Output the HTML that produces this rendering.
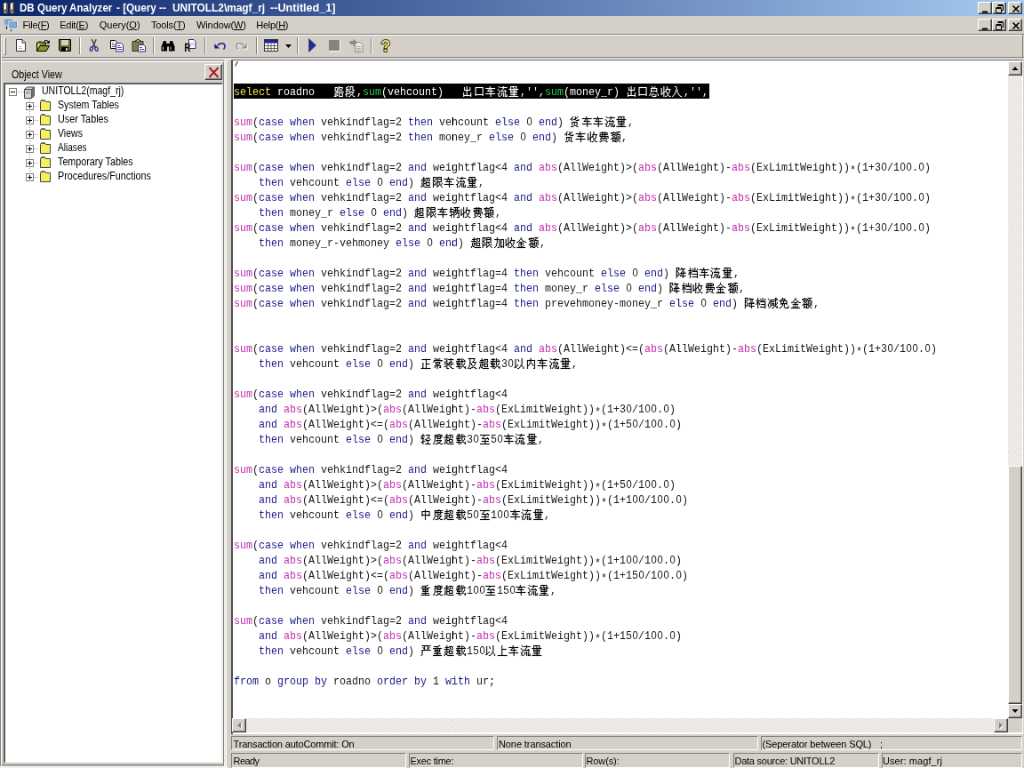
<!DOCTYPE html>
<html><head><meta charset="utf-8"><title>DB Query Analyzer</title><style>
html,body{margin:0;padding:0;}
body{width:1024px;height:768px;overflow:hidden;background:#d4d0c8;font-family:"Liberation Sans",sans-serif;}
#r{position:absolute;left:0;top:0;width:1152px;height:864px;transform:scale(0.888889);transform-origin:0 0;background:#d4d0c8;overflow:hidden;will-change:transform}
.ab{position:absolute}
.ic{position:absolute;overflow:visible}
.t{position:absolute;white-space:nowrap;font-family:"Liberation Sans",sans-serif}
.btn{background:#d4d0c8;box-sizing:border-box;border-top:1px solid #fff;border-left:1px solid #fff;border-right:1px solid #404040;border-bottom:1px solid #404040;box-shadow:inset -1px -1px 0 #808080}
.sunk{box-sizing:border-box;border-top:1px solid #808080;border-left:1px solid #808080;border-right:1px solid #fff;border-bottom:1px solid #fff}
.chk{background:#ebe9e5;background-image:conic-gradient(#fff 25%,#d8d4cc 0 50%,#fff 0 75%,#d8d4cc 0);background-size:2px 2px}
.cl{position:absolute;left:263.4px;height:17px;line-height:17px;white-space:pre;font-family:"Liberation Mono",monospace;font-size:13px;color:#181818;transform:scaleX(0.89729);transform-origin:0 0}
.cl .k{color:#20208c}
.cl .as{position:relative;top:2.5px}
.cl .z{display:inline-block;width:7.801px;text-align:center;font-family:"Liberation Sans",sans-serif;font-size:12.500px}
.cl .f{color:#c030b0}
.cl.sel{color:#fff}
.cl.sel .k{color:#e8e850}
.cl.sel .f{color:#28c850}
.cl.sel svg{fill:#fff;stroke:#fff}
.cj{stroke:#000;stroke-width:.15;display:inline-block;width:14.488px;height:17px;vertical-align:top;fill:#000;overflow:visible}
</style></head><body><div id="r"><svg width="0" height="0" style="position:absolute"><defs><path id="g8def" d="M6 2h1v1h-1zM1 3h4v1h-4zM6 3h5v1h-5zM1 4h1v1h-1zM4 4h1v1h-1zM6 4h1v1h-1zM10 4h1v1h-1zM1 5h1v1h-1zM4 5h2v1h-2zM7 5h1v1h-1zM9 5h1v1h-1zM1 6h1v1h-1zM4 6h1v1h-1zM8 6h1v1h-1zM1 7h4v1h-4zM6 7h2v1h-2zM9 7h2v1h-2zM3 8h1v1h-1zM5 8h1v1h-1zM11 8h1v1h-1zM1 9h1v1h-1zM3 9h2v1h-2zM6 9h5v1h-5zM1 10h1v1h-1zM3 10h1v1h-1zM6 10h1v1h-1zM10 10h1v1h-1zM1 11h1v1h-1zM3 11h1v1h-1zM6 11h1v1h-1zM10 11h1v1h-1zM1 12h1v1h-1zM3 12h2v1h-2zM6 12h1v1h-1zM10 12h1v1h-1zM0 13h3v1h-3zM6 13h5v1h-5z"/><path id="g6bb5" d="M3 2h2v1h-2zM6 2h4v1h-4zM1 3h2v1h-2zM6 3h1v1h-1zM9 3h1v1h-1zM1 4h1v1h-1zM6 4h1v1h-1zM9 4h1v1h-1zM1 5h4v1h-4zM6 5h1v1h-1zM9 5h1v1h-1zM1 6h1v1h-1zM5 6h1v1h-1zM9 6h3v1h-3zM1 7h4v1h-4zM1 8h1v1h-1zM5 8h6v1h-6zM1 9h1v1h-1zM5 9h1v1h-1zM9 9h1v1h-1zM1 10h4v1h-4zM6 10h1v1h-1zM9 10h1v1h-1zM0 11h2v1h-2zM7 11h2v1h-2zM1 12h1v1h-1zM6 12h1v1h-1zM9 12h1v1h-1zM1 13h1v1h-1zM4 13h2v1h-2zM10 13h2v1h-2z"/><path id="g51fa" d="M5 2h1v1h-1zM2 3h1v1h-1zM5 3h1v1h-1zM9 3h1v1h-1zM2 4h1v1h-1zM5 4h1v1h-1zM9 4h1v1h-1zM2 5h1v1h-1zM5 5h1v1h-1zM9 5h1v1h-1zM2 6h8v1h-8zM5 7h1v1h-1zM5 8h1v1h-1zM1 9h1v1h-1zM5 9h1v1h-1zM10 9h1v1h-1zM1 10h1v1h-1zM5 10h1v1h-1zM10 10h1v1h-1zM1 11h1v1h-1zM5 11h1v1h-1zM10 11h1v1h-1zM1 12h10v1h-10zM1 13h1v1h-1zM10 13h1v1h-1z"/><path id="g53e3" d="M1 3h10v1h-10zM1 4h1v1h-1zM10 4h1v1h-1zM1 5h1v1h-1zM10 5h1v1h-1zM1 6h1v1h-1zM10 6h1v1h-1zM1 7h1v1h-1zM10 7h1v1h-1zM1 8h1v1h-1zM10 8h1v1h-1zM1 9h1v1h-1zM10 9h1v1h-1zM1 10h1v1h-1zM10 10h1v1h-1zM1 11h10v1h-10zM1 12h1v1h-1zM10 12h1v1h-1z"/><path id="g8f66" d="M5 2h1v1h-1zM5 3h1v1h-1zM0 4h12v1h-12zM4 5h1v1h-1zM6 5h1v1h-1zM3 6h1v1h-1zM6 6h1v1h-1zM2 7h8v1h-8zM6 8h1v1h-1zM6 9h1v1h-1zM0 10h12v1h-12zM6 11h1v1h-1zM6 12h1v1h-1zM6 13h1v1h-1z"/><path id="g6d41" d="M1 2h1v1h-1zM7 2h1v1h-1zM2 3h1v1h-1zM4 3h8v1h-8zM7 4h1v1h-1zM0 5h1v1h-1zM6 5h1v1h-1zM1 6h1v1h-1zM5 6h1v1h-1zM9 6h1v1h-1zM2 7h1v1h-1zM4 7h7v1h-7zM2 8h1v1h-1zM10 8h1v1h-1zM2 9h1v1h-1zM5 9h1v1h-1zM7 9h1v1h-1zM9 9h1v1h-1zM0 10h2v1h-2zM5 10h1v1h-1zM7 10h1v1h-1zM9 10h1v1h-1zM1 11h1v1h-1zM5 11h1v1h-1zM7 11h1v1h-1zM9 11h1v1h-1zM11 11h1v1h-1zM1 12h1v1h-1zM4 12h1v1h-1zM7 12h1v1h-1zM9 12h1v1h-1zM11 12h1v1h-1zM1 13h1v1h-1zM3 13h1v1h-1zM7 13h1v1h-1zM9 13h3v1h-3z"/><path id="g91cf" d="M2 2h8v1h-8zM2 3h1v1h-1zM5 3h1v1h-1zM9 3h1v1h-1zM2 4h1v1h-1zM6 4h1v1h-1zM9 4h1v1h-1zM0 5h12v1h-12zM2 6h1v1h-1zM6 6h1v1h-1zM9 6h1v1h-1zM2 7h8v1h-8zM2 8h1v1h-1zM6 8h1v1h-1zM9 8h1v1h-1zM2 9h8v1h-8zM6 10h1v1h-1zM2 11h8v1h-8zM6 12h1v1h-1zM0 13h12v1h-12z"/><path id="g603b" d="M3 2h1v1h-1zM7 2h1v1h-1zM4 3h1v1h-1zM6 3h1v1h-1zM2 4h8v1h-8zM2 5h1v1h-1zM9 5h1v1h-1zM2 6h1v1h-1zM9 6h1v1h-1zM2 7h8v1h-8zM2 8h1v1h-1zM9 8h1v1h-1zM1 10h1v1h-1zM3 10h1v1h-1zM5 10h1v1h-1zM10 10h1v1h-1zM1 11h1v1h-1zM3 11h1v1h-1zM6 11h1v1h-1zM8 11h1v1h-1zM11 11h1v1h-1zM0 12h1v1h-1zM3 12h1v1h-1zM8 12h1v1h-1zM11 12h1v1h-1zM4 13h5v1h-5z"/><path id="g6536" d="M3 2h1v1h-1zM7 2h1v1h-1zM3 3h1v1h-1zM7 3h1v1h-1zM0 4h1v1h-1zM3 4h1v1h-1zM7 4h1v1h-1zM0 5h1v1h-1zM3 5h1v1h-1zM6 5h6v1h-6zM0 6h1v1h-1zM3 6h1v1h-1zM6 6h1v1h-1zM10 6h1v1h-1zM0 7h1v1h-1zM3 7h1v1h-1zM5 7h2v1h-2zM10 7h1v1h-1zM0 8h1v1h-1zM3 8h2v1h-2zM6 8h1v1h-1zM10 8h1v1h-1zM0 9h1v1h-1zM2 9h2v1h-2zM7 9h1v1h-1zM9 9h1v1h-1zM0 10h2v1h-2zM3 10h1v1h-1zM7 10h1v1h-1zM9 10h1v1h-1zM0 11h1v1h-1zM3 11h1v1h-1zM8 11h1v1h-1zM3 12h1v1h-1zM7 12h1v1h-1zM9 12h1v1h-1zM3 13h1v1h-1zM5 13h2v1h-2zM10 13h2v1h-2z"/><path id="g5165" d="M3 2h2v1h-2zM5 3h1v1h-1zM5 4h1v1h-1zM5 5h1v1h-1zM4 6h1v1h-1zM6 6h1v1h-1zM4 7h1v1h-1zM6 7h1v1h-1zM4 8h1v1h-1zM6 8h1v1h-1zM3 9h1v1h-1zM7 9h1v1h-1zM3 10h1v1h-1zM7 10h1v1h-1zM2 11h1v1h-1zM8 11h1v1h-1zM1 12h1v1h-1zM9 12h1v1h-1zM0 13h1v1h-1zM10 13h2v1h-2z"/><path id="g8d27" d="M3 2h1v1h-1zM6 2h1v1h-1zM9 2h1v1h-1zM2 3h1v1h-1zM6 3h1v1h-1zM8 3h1v1h-1zM1 4h2v1h-2zM6 4h2v1h-2zM0 5h1v1h-1zM2 5h1v1h-1zM4 5h3v1h-3zM10 5h1v1h-1zM2 6h1v1h-1zM7 6h4v1h-4zM2 8h7v1h-7zM2 9h1v1h-1zM5 9h1v1h-1zM8 9h1v1h-1zM2 10h1v1h-1zM5 10h1v1h-1zM8 10h1v1h-1zM2 11h1v1h-1zM5 11h1v1h-1zM8 11h1v1h-1zM4 12h1v1h-1zM6 12h2v1h-2zM1 13h3v1h-3zM8 13h2v1h-2z"/><path id="g8d39" d="M4 2h1v1h-1zM7 2h1v1h-1zM1 3h10v1h-10zM4 4h1v1h-1zM7 4h1v1h-1zM10 4h1v1h-1zM1 5h10v1h-10zM1 6h1v1h-1zM4 6h1v1h-1zM7 6h1v1h-1zM1 7h11v1h-11zM3 8h1v1h-1zM7 8h1v1h-1zM11 8h1v1h-1zM2 9h8v1h-8zM11 9h1v1h-1zM2 10h1v1h-1zM6 10h1v1h-1zM9 10h1v1h-1zM2 11h1v1h-1zM5 11h1v1h-1zM9 11h1v1h-1zM3 12h2v1h-2zM7 12h2v1h-2zM1 13h2v1h-2zM9 13h2v1h-2z"/><path id="g989d" d="M3 2h1v1h-1zM7 2h5v1h-5zM0 3h7v1h-7zM9 3h1v1h-1zM0 4h1v1h-1zM2 4h1v1h-1zM6 4h1v1h-1zM8 4h1v1h-1zM2 5h4v1h-4zM7 5h5v1h-5zM1 6h2v1h-2zM5 6h1v1h-1zM7 6h1v1h-1zM11 6h1v1h-1zM3 7h2v1h-2zM7 7h1v1h-1zM9 7h1v1h-1zM11 7h1v1h-1zM2 8h1v1h-1zM5 8h1v1h-1zM7 8h1v1h-1zM9 8h1v1h-1zM11 8h1v1h-1zM1 9h7v1h-7zM9 9h1v1h-1zM11 9h1v1h-1zM0 10h1v1h-1zM2 10h1v1h-1zM5 10h1v1h-1zM7 10h1v1h-1zM9 10h1v1h-1zM11 10h1v1h-1zM2 11h1v1h-1zM5 11h1v1h-1zM7 11h1v1h-1zM9 11h1v1h-1zM2 12h4v1h-4zM8 12h1v1h-1zM10 12h1v1h-1zM2 13h1v1h-1zM5 13h3v1h-3zM11 13h1v1h-1z"/><path id="g8d85" d="M3 2h1v1h-1zM3 3h1v1h-1zM6 3h5v1h-5zM1 4h5v1h-5zM7 4h1v1h-1zM10 4h1v1h-1zM3 5h1v1h-1zM7 5h1v1h-1zM10 5h1v1h-1zM0 6h6v1h-6zM7 6h1v1h-1zM9 6h2v1h-2zM3 7h1v1h-1zM6 7h1v1h-1zM1 8h1v1h-1zM3 8h1v1h-1zM6 8h5v1h-5zM1 9h1v1h-1zM3 9h4v1h-4zM10 9h1v1h-1zM1 10h1v1h-1zM3 10h1v1h-1zM6 10h1v1h-1zM10 10h1v1h-1zM1 11h1v1h-1zM3 11h1v1h-1zM6 11h5v1h-5zM0 12h1v1h-1zM2 12h2v1h-2zM0 13h1v1h-1zM4 13h8v1h-8z"/><path id="g9650" d="M0 2h4v1h-4zM5 2h6v1h-6zM0 3h1v1h-1zM3 3h1v1h-1zM5 3h1v1h-1zM10 3h1v1h-1zM0 4h1v1h-1zM3 4h1v1h-1zM5 4h6v1h-6zM0 5h1v1h-1zM2 5h1v1h-1zM5 5h1v1h-1zM10 5h1v1h-1zM0 6h2v1h-2zM5 6h1v1h-1zM10 6h1v1h-1zM0 7h1v1h-1zM2 7h1v1h-1zM5 7h6v1h-6zM0 8h1v1h-1zM3 8h1v1h-1zM5 8h1v1h-1zM7 8h1v1h-1zM0 9h1v1h-1zM3 9h1v1h-1zM5 9h1v1h-1zM8 9h1v1h-1zM11 9h1v1h-1zM0 10h2v1h-2zM3 10h1v1h-1zM5 10h1v1h-1zM8 10h1v1h-1zM10 10h1v1h-1zM0 11h1v1h-1zM2 11h1v1h-1zM5 11h1v1h-1zM7 11h1v1h-1zM9 11h1v1h-1zM0 12h1v1h-1zM5 12h2v1h-2zM10 12h1v1h-1zM0 13h1v1h-1zM5 13h1v1h-1zM11 13h1v1h-1z"/><path id="g8f86" d="M1 2h1v1h-1zM5 2h7v1h-7zM1 3h1v1h-1zM7 3h1v1h-1zM9 3h1v1h-1zM0 4h5v1h-5zM7 4h1v1h-1zM9 4h1v1h-1zM1 5h1v1h-1zM5 5h7v1h-7zM0 6h1v1h-1zM2 6h1v1h-1zM5 6h1v1h-1zM7 6h1v1h-1zM9 6h1v1h-1zM11 6h1v1h-1zM0 7h6v1h-6zM7 7h1v1h-1zM9 7h1v1h-1zM11 7h1v1h-1zM2 8h1v1h-1zM5 8h2v1h-2zM8 8h2v1h-2zM11 8h1v1h-1zM2 9h1v1h-1zM5 9h1v1h-1zM8 9h1v1h-1zM10 9h2v1h-2zM2 10h4v1h-4zM7 10h1v1h-1zM11 10h1v1h-1zM0 11h3v1h-3zM5 11h1v1h-1zM11 11h1v1h-1zM2 12h1v1h-1zM5 12h1v1h-1zM11 12h1v1h-1zM2 13h1v1h-1zM5 13h1v1h-1zM9 13h3v1h-3z"/><path id="g52a0" d="M3 2h1v1h-1zM3 3h1v1h-1zM0 4h7v1h-7zM8 4h4v1h-4zM3 5h1v1h-1zM6 5h1v1h-1zM8 5h1v1h-1zM11 5h1v1h-1zM3 6h1v1h-1zM6 6h1v1h-1zM8 6h1v1h-1zM11 6h1v1h-1zM3 7h1v1h-1zM6 7h1v1h-1zM8 7h1v1h-1zM11 7h1v1h-1zM3 8h1v1h-1zM6 8h1v1h-1zM8 8h1v1h-1zM11 8h1v1h-1zM2 9h1v1h-1zM6 9h1v1h-1zM8 9h1v1h-1zM11 9h1v1h-1zM2 10h1v1h-1zM6 10h1v1h-1zM8 10h1v1h-1zM11 10h1v1h-1zM2 11h1v1h-1zM6 11h1v1h-1zM8 11h1v1h-1zM11 11h1v1h-1zM1 12h1v1h-1zM6 12h1v1h-1zM8 12h4v1h-4zM0 13h1v1h-1zM4 13h2v1h-2zM8 13h1v1h-1zM11 13h1v1h-1z"/><path id="g91d1" d="M5 2h1v1h-1zM5 3h1v1h-1zM4 4h1v1h-1zM6 4h1v1h-1zM3 5h1v1h-1zM7 5h1v1h-1zM2 6h1v1h-1zM8 6h2v1h-2zM0 7h2v1h-2zM3 7h5v1h-5zM10 7h2v1h-2zM5 8h1v1h-1zM2 9h7v1h-7zM5 10h1v1h-1zM2 11h1v1h-1zM5 11h1v1h-1zM8 11h1v1h-1zM3 12h1v1h-1zM5 12h1v1h-1zM7 12h1v1h-1zM0 13h11v1h-11z"/><path id="g964d" d="M0 2h4v1h-4zM6 2h1v1h-1zM0 3h1v1h-1zM3 3h1v1h-1zM6 3h5v1h-5zM0 4h1v1h-1zM3 4h1v1h-1zM5 4h1v1h-1zM7 4h1v1h-1zM9 4h1v1h-1zM0 5h1v1h-1zM2 5h1v1h-1zM8 5h1v1h-1zM0 6h2v1h-2zM7 6h1v1h-1zM9 6h1v1h-1zM0 7h1v1h-1zM2 7h1v1h-1zM6 7h1v1h-1zM8 7h1v1h-1zM10 7h1v1h-1zM0 8h1v1h-1zM3 8h1v1h-1zM5 8h7v1h-7zM0 9h1v1h-1zM3 9h1v1h-1zM6 9h1v1h-1zM8 9h1v1h-1zM0 10h2v1h-2zM3 10h1v1h-1zM5 10h1v1h-1zM8 10h1v1h-1zM0 11h1v1h-1zM2 11h1v1h-1zM5 11h7v1h-7zM0 12h1v1h-1zM8 12h1v1h-1zM0 13h1v1h-1zM8 13h1v1h-1z"/><path id="g6863" d="M2 2h1v1h-1zM8 2h1v1h-1zM2 3h1v1h-1zM5 3h1v1h-1zM8 3h1v1h-1zM11 3h1v1h-1zM2 4h1v1h-1zM6 4h1v1h-1zM8 4h1v1h-1zM11 4h1v1h-1zM0 5h5v1h-5zM6 5h1v1h-1zM8 5h1v1h-1zM10 5h1v1h-1zM2 6h1v1h-1zM5 6h7v1h-7zM1 7h3v1h-3zM11 7h1v1h-1zM1 8h2v1h-2zM4 8h1v1h-1zM11 8h1v1h-1zM0 9h1v1h-1zM2 9h1v1h-1zM4 9h1v1h-1zM6 9h6v1h-6zM2 10h1v1h-1zM11 10h1v1h-1zM2 11h1v1h-1zM11 11h1v1h-1zM2 12h1v1h-1zM5 12h7v1h-7zM2 13h1v1h-1zM11 13h1v1h-1z"/><path id="g51cf" d="M9 2h2v1h-2zM0 3h1v1h-1zM9 3h1v1h-1zM11 3h1v1h-1zM1 4h1v1h-1zM3 4h9v1h-9zM3 5h1v1h-1zM9 5h1v1h-1zM2 6h6v1h-6zM9 6h1v1h-1zM1 7h1v1h-1zM3 7h1v1h-1zM9 7h1v1h-1zM11 7h1v1h-1zM1 8h1v1h-1zM3 8h1v1h-1zM5 8h3v1h-3zM9 8h1v1h-1zM11 8h1v1h-1zM0 9h1v1h-1zM3 9h1v1h-1zM5 9h1v1h-1zM7 9h1v1h-1zM9 9h2v1h-2zM0 10h1v1h-1zM3 10h1v1h-1zM5 10h3v1h-3zM9 10h1v1h-1zM0 11h1v1h-1zM3 11h1v1h-1zM8 11h2v1h-2zM11 11h1v1h-1zM2 12h1v1h-1zM7 12h1v1h-1zM10 12h2v1h-2zM1 13h1v1h-1zM5 13h2v1h-2zM11 13h1v1h-1z"/><path id="g514d" d="M4 2h1v1h-1zM3 3h5v1h-5zM2 4h1v1h-1zM6 4h1v1h-1zM0 5h10v1h-10zM2 6h1v1h-1zM5 6h1v1h-1zM9 6h1v1h-1zM2 7h1v1h-1zM5 7h1v1h-1zM9 7h1v1h-1zM2 8h8v1h-8zM2 9h1v1h-1zM4 9h1v1h-1zM6 9h1v1h-1zM9 9h1v1h-1zM4 10h1v1h-1zM6 10h1v1h-1zM3 11h1v1h-1zM6 11h1v1h-1zM11 11h1v1h-1zM2 12h1v1h-1zM6 12h1v1h-1zM11 12h1v1h-1zM0 13h2v1h-2zM7 13h5v1h-5z"/><path id="g6b63" d="M1 3h11v1h-11zM6 4h1v1h-1zM6 5h1v1h-1zM6 6h1v1h-1zM2 7h1v1h-1zM6 7h1v1h-1zM2 8h1v1h-1zM6 8h5v1h-5zM2 9h1v1h-1zM6 9h1v1h-1zM2 10h1v1h-1zM6 10h1v1h-1zM2 11h1v1h-1zM6 11h1v1h-1zM2 12h1v1h-1zM6 12h1v1h-1zM0 13h12v1h-12z"/><path id="g5e38" d="M2 2h1v1h-1zM5 2h1v1h-1zM8 2h1v1h-1zM3 3h1v1h-1zM5 3h1v1h-1zM7 3h1v1h-1zM1 4h11v1h-11zM1 5h1v1h-1zM10 5h1v1h-1zM0 6h1v1h-1zM3 6h6v1h-6zM3 7h1v1h-1zM8 7h1v1h-1zM3 8h6v1h-6zM5 9h1v1h-1zM2 10h8v1h-8zM2 11h1v1h-1zM5 11h1v1h-1zM9 11h1v1h-1zM2 12h1v1h-1zM5 12h1v1h-1zM8 12h2v1h-2zM5 13h1v1h-1z"/><path id="g88c5" d="M0 2h1v1h-1zM3 2h1v1h-1zM8 2h1v1h-1zM1 3h1v1h-1zM3 3h1v1h-1zM5 3h7v1h-7zM3 4h1v1h-1zM8 4h1v1h-1zM2 5h2v1h-2zM8 5h1v1h-1zM0 6h2v1h-2zM3 6h1v1h-1zM6 6h5v1h-5zM3 7h1v1h-1zM6 7h1v1h-1zM0 8h12v1h-12zM4 9h2v1h-2zM9 9h1v1h-1zM2 10h2v1h-2zM6 10h1v1h-1zM8 10h1v1h-1zM0 11h2v1h-2zM3 11h1v1h-1zM7 11h1v1h-1zM3 12h1v1h-1zM8 12h2v1h-2zM3 13h3v1h-3zM10 13h2v1h-2z"/><path id="g8f7d" d="M3 2h1v1h-1zM7 2h1v1h-1zM1 3h5v1h-5zM7 3h1v1h-1zM9 3h1v1h-1zM3 4h1v1h-1zM7 4h1v1h-1zM10 4h1v1h-1zM0 5h12v1h-12zM2 6h1v1h-1zM7 6h1v1h-1zM0 7h6v1h-6zM7 7h1v1h-1zM10 7h1v1h-1zM1 8h1v1h-1zM3 8h1v1h-1zM7 8h1v1h-1zM10 8h1v1h-1zM1 9h5v1h-5zM7 9h1v1h-1zM9 9h1v1h-1zM3 10h1v1h-1zM8 10h1v1h-1zM0 11h6v1h-6zM7 11h1v1h-1zM9 11h1v1h-1zM11 11h1v1h-1zM3 12h1v1h-1zM6 12h1v1h-1zM10 12h2v1h-2zM3 13h1v1h-1zM5 13h1v1h-1zM11 13h1v1h-1z"/><path id="g53ca" d="M1 2h9v1h-9zM3 3h1v1h-1zM8 3h1v1h-1zM3 4h1v1h-1zM8 4h1v1h-1zM3 5h1v1h-1zM7 5h1v1h-1zM3 6h1v1h-1zM6 6h5v1h-5zM3 7h2v1h-2zM10 7h1v1h-1zM3 8h1v1h-1zM5 8h1v1h-1zM9 8h1v1h-1zM3 9h1v1h-1zM5 9h1v1h-1zM9 9h1v1h-1zM2 10h1v1h-1zM6 10h1v1h-1zM8 10h1v1h-1zM2 11h1v1h-1zM7 11h1v1h-1zM1 12h1v1h-1zM5 12h2v1h-2zM8 12h2v1h-2zM0 13h1v1h-1zM2 13h3v1h-3zM10 13h2v1h-2z"/><path id="g4ee5" d="M9 2h1v1h-1zM1 3h1v1h-1zM4 3h1v1h-1zM9 3h1v1h-1zM1 4h1v1h-1zM5 4h1v1h-1zM9 4h1v1h-1zM1 5h1v1h-1zM5 5h1v1h-1zM9 5h1v1h-1zM1 6h1v1h-1zM9 6h1v1h-1zM1 7h1v1h-1zM9 7h1v1h-1zM1 8h1v1h-1zM9 8h1v1h-1zM1 9h1v1h-1zM4 9h1v1h-1zM8 9h1v1h-1zM1 10h1v1h-1zM3 10h1v1h-1zM8 10h2v1h-2zM1 11h2v1h-2zM7 11h1v1h-1zM10 11h1v1h-1zM0 12h2v1h-2zM6 12h1v1h-1zM11 12h1v1h-1zM4 13h2v1h-2zM11 13h1v1h-1z"/><path id="g5185" d="M5 2h1v1h-1zM5 3h1v1h-1zM1 4h10v1h-10zM1 5h1v1h-1zM5 5h1v1h-1zM10 5h1v1h-1zM1 6h1v1h-1zM5 6h1v1h-1zM10 6h1v1h-1zM1 7h1v1h-1zM4 7h1v1h-1zM6 7h1v1h-1zM10 7h1v1h-1zM1 8h1v1h-1zM4 8h1v1h-1zM7 8h1v1h-1zM10 8h1v1h-1zM1 9h1v1h-1zM3 9h1v1h-1zM8 9h1v1h-1zM10 9h1v1h-1zM1 10h2v1h-2zM8 10h1v1h-1zM10 10h1v1h-1zM1 11h1v1h-1zM10 11h1v1h-1zM1 12h1v1h-1zM10 12h1v1h-1zM1 13h1v1h-1zM9 13h2v1h-2z"/><path id="g8f7b" d="M2 2h1v1h-1zM2 3h1v1h-1zM6 3h5v1h-5zM0 4h5v1h-5zM10 4h1v1h-1zM1 5h1v1h-1zM9 5h1v1h-1zM0 6h1v1h-1zM2 6h1v1h-1zM8 6h2v1h-2zM0 7h4v1h-4zM7 7h1v1h-1zM10 7h1v1h-1zM2 8h1v1h-1zM5 8h2v1h-2zM11 8h1v1h-1zM2 9h1v1h-1zM6 9h5v1h-5zM2 10h3v1h-3zM8 10h1v1h-1zM0 11h3v1h-3zM8 11h1v1h-1zM2 12h1v1h-1zM8 12h1v1h-1zM2 13h1v1h-1zM5 13h7v1h-7z"/><path id="g5ea6" d="M7 2h1v1h-1zM2 3h10v1h-10zM2 4h1v1h-1zM5 4h1v1h-1zM9 4h1v1h-1zM2 5h10v1h-10zM2 6h1v1h-1zM5 6h1v1h-1zM9 6h1v1h-1zM2 7h1v1h-1zM5 7h5v1h-5zM2 8h1v1h-1zM2 9h1v1h-1zM4 9h7v1h-7zM2 10h1v1h-1zM5 10h1v1h-1zM9 10h1v1h-1zM1 11h1v1h-1zM6 11h1v1h-1zM8 11h1v1h-1zM1 12h1v1h-1zM6 12h3v1h-3zM0 13h1v1h-1zM3 13h3v1h-3zM9 13h3v1h-3z"/><path id="g81f3" d="M0 3h12v1h-12zM5 4h1v1h-1zM4 5h1v1h-1zM3 6h1v1h-1zM9 6h1v1h-1zM2 7h9v1h-9zM6 8h1v1h-1zM10 8h1v1h-1zM6 9h1v1h-1zM2 10h9v1h-9zM6 11h1v1h-1zM6 12h1v1h-1zM0 13h12v1h-12z"/><path id="g4e2d" d="M5 2h1v1h-1zM5 3h1v1h-1zM1 4h10v1h-10zM1 5h1v1h-1zM5 5h1v1h-1zM10 5h1v1h-1zM1 6h1v1h-1zM5 6h1v1h-1zM10 6h1v1h-1zM1 7h1v1h-1zM5 7h1v1h-1zM10 7h1v1h-1zM1 8h10v1h-10zM1 9h1v1h-1zM5 9h1v1h-1zM10 9h1v1h-1zM5 10h1v1h-1zM5 11h1v1h-1zM5 12h1v1h-1zM5 13h1v1h-1z"/><path id="g91cd" d="M7 2h2v1h-2zM1 3h6v1h-6zM5 4h1v1h-1zM0 5h11v1h-11zM2 6h1v1h-1zM5 6h1v1h-1zM8 6h1v1h-1zM2 7h7v1h-7zM2 8h1v1h-1zM5 8h1v1h-1zM8 8h1v1h-1zM2 9h7v1h-7zM5 10h1v1h-1zM1 11h9v1h-9zM5 12h1v1h-1zM0 13h11v1h-11z"/><path id="g4e25" d="M1 2h11v1h-11zM4 3h1v1h-1zM8 3h1v1h-1zM2 4h1v1h-1zM4 4h1v1h-1zM8 4h1v1h-1zM10 4h1v1h-1zM3 5h2v1h-2zM8 5h2v1h-2zM4 6h1v1h-1zM8 6h1v1h-1zM1 7h11v1h-11zM1 8h1v1h-1zM1 9h1v1h-1zM1 10h1v1h-1zM1 11h1v1h-1zM1 12h1v1h-1zM0 13h1v1h-1z"/><path id="g4e0a" d="M5 2h1v1h-1zM5 3h1v1h-1zM5 4h1v1h-1zM5 5h1v1h-1zM5 6h6v1h-6zM5 7h1v1h-1zM5 8h1v1h-1zM5 9h1v1h-1zM5 10h1v1h-1zM5 11h1v1h-1zM5 12h1v1h-1zM0 13h12v1h-12z"/></defs></svg>
<div class="ab " style="left:0.00px;top:0.00px;width:1152.00px;height:18.00px;background:linear-gradient(90deg,#0a246a,#a6caf0)"></div>
<svg class="ic" style="left:2px;top:1px" width="16" height="16" viewBox="0 0 16 16"><rect x="1.500" y="1.500" width="5.500" height="13" rx="2" fill="#a8a8a8" stroke="#1c1c1c"/><rect x="9" y="1.500" width="5.500" height="13" rx="2" fill="#a8a8a8" stroke="#1c1c1c"/><rect x="2.500" y="3" width="2.500" height="6" fill="#f4f4f4"/><rect x="10" y="3" width="2.500" height="6" fill="#f4f4f4"/><rect x="5" y="3" width="1.500" height="10" fill="#484848"/><rect x="12.500" y="3" width="1.500" height="10" fill="#484848"/><rect x="2.500" y="10" width="2.500" height="3" fill="#707070"/><rect x="10" y="10" width="2.500" height="3" fill="#707070"/></svg>
<div class="t" style="left:22.30px;top:1.00px;height:16px;line-height:16px;font-size:12px;font-weight:bold;transform:scaleX(0.9635);transform-origin:0 50%;color:#fff;white-space:pre;">DB Query Analyzer</div>
<div class="t" style="left:131.00px;top:1.00px;height:16px;line-height:16px;font-size:12px;font-weight:bold;transform:scaleX(0.9733);transform-origin:0 50%;color:#fff;white-space:pre;">- [Query --</div>
<div class="t" style="left:193.50px;top:1.00px;height:16px;line-height:16px;font-size:12px;font-weight:bold;transform:scaleX(0.9903);transform-origin:0 50%;color:#fff;white-space:pre;">UNITOLL2\magf_rj</div>
<div class="t" style="left:304.30px;top:1.00px;height:16px;line-height:16px;font-size:12px;font-weight:bold;transform:scaleX(1.0502);transform-origin:0 50%;color:#fff;white-space:pre;">--Untitled_1]</div>
<div class="ab btn" style="left:1100.00px;top:2.00px;width:16px;height:14px"><svg width="16" height="14" viewBox="0 0 16 14" style="position:absolute;left:0;top:0"><path d="M4 10.500h6" stroke="#000" stroke-width="2"/></svg></div>
<div class="ab btn" style="left:1116.00px;top:2.00px;width:16px;height:14px"><svg width="16" height="14" viewBox="0 0 16 14" style="position:absolute;left:0;top:0"><path d="M5.500 3.500h6v5h-2M5.500 2.500h6" stroke="#000" fill="none"/><path d="M3.500 6.500h6v5h-6zM3.500 5.500h6" stroke="#000" fill="none"/></svg></div>
<div class="ab btn" style="left:1134.00px;top:2.00px;width:16px;height:14px"><svg width="16" height="14" viewBox="0 0 16 14" style="position:absolute;left:0;top:0"><path d="M4.500 3.500l7 7M11.500 3.500l-7 7" stroke="#000" stroke-width="1.700"/></svg></div>
<svg class="ic" style="left:4px;top:20px" width="17" height="17" viewBox="0 0 17 17"><rect x="1" y="1.500" width="9" height="6.500" fill="#7aa0c4" stroke="#a4c0d8"/><rect x="6" y="4" width="9.500" height="8" fill="#5c8ebc" stroke="#dce8f2"/><rect x="7.500" y="5.500" width="6.500" height="5" fill="#80acd2"/><path d="M3.500 9.500v3.500" stroke="#202020" stroke-width="1.200"/><path d="M8.500 13v2.500" stroke="#405060" stroke-width="1.200"/></svg>
<div class="t" style="left:25.60px;top:19.50px;height:16px;line-height:16px;font-size:11px;letter-spacing:-0.267px;color:#000;">File(<u>F</u>)</div>
<div class="t" style="left:67.30px;top:19.50px;height:16px;line-height:16px;font-size:11px;letter-spacing:-0.274px;color:#000;">Edit(<u>E</u>)</div>
<div class="t" style="left:111.80px;top:19.50px;height:16px;line-height:16px;font-size:11px;letter-spacing:-0.017px;color:#000;">Query(<u>Q</u>)</div>
<div class="t" style="left:169.90px;top:19.50px;height:16px;line-height:16px;font-size:11px;letter-spacing:-0.128px;color:#000;">Tools(<u>T</u>)</div>
<div class="t" style="left:221.00px;top:19.50px;height:16px;line-height:16px;font-size:11px;letter-spacing:-0.103px;color:#000;">Window(<u>W</u>)</div>
<div class="t" style="left:288.30px;top:19.50px;height:16px;line-height:16px;font-size:11px;letter-spacing:-0.285px;color:#000;">Help(<u>H</u>)</div>
<div class="ab btn" style="left:1100.00px;top:21.00px;width:16px;height:14px"><svg width="16" height="14" viewBox="0 0 16 14" style="position:absolute;left:0;top:0"><path d="M4 10.500h6" stroke="#000" stroke-width="2"/></svg></div>
<div class="ab btn" style="left:1116.00px;top:21.00px;width:16px;height:14px"><svg width="16" height="14" viewBox="0 0 16 14" style="position:absolute;left:0;top:0"><path d="M5.500 3.500h6v5h-2M5.500 2.500h6" stroke="#000" fill="none"/><path d="M3.500 6.500h6v5h-6zM3.500 5.500h6" stroke="#000" fill="none"/></svg></div>
<div class="ab btn" style="left:1134.00px;top:21.00px;width:16px;height:14px"><svg width="16" height="14" viewBox="0 0 16 14" style="position:absolute;left:0;top:0"><path d="M4.500 3.500l7 7M11.500 3.500l-7 7" stroke="#000" stroke-width="1.700"/></svg></div>
<div class="ab " style="left:0.00px;top:38.00px;width:1152.00px;height:1.00px;background:#808080"></div>
<div class="ab " style="left:0.00px;top:39.00px;width:1150.00px;height:1.00px;background:#fff"></div>
<div class="ab " style="left:1150.00px;top:39.00px;width:1.00px;height:26.00px;background:#808080"></div>
<div class="ab " style="left:0.00px;top:64.00px;width:1152.00px;height:1.00px;background:#808080"></div>
<div class="ab " style="left:0.00px;top:66.00px;width:1152.00px;height:1.00px;background:#fff"></div>
<div class="ab " style="left:4.00px;top:42.00px;width:3.00px;height:20.00px;border-left:1px solid #fff;border-top:1px solid #fff;border-right:1px solid #808080;border-bottom:1px solid #808080;box-sizing:border-box"></div>
<svg class="ic" style="left:15.00px;top:42.60px" width="16" height="16" viewBox="0 0 16 16"><path d="M3.5 1.5h6.500l3.500 3.500v9.500h-10z" fill="#fff" stroke="#303030"/><path d="M10 1.500v3.500h3.500" fill="#e8e8e8" stroke="#303030"/><path d="M6 9.500h3M6 11.500h4" stroke="#b0b0b0"/></svg>
<svg class="ic" style="left:40.00px;top:42.60px" width="16" height="16" viewBox="0 0 16 16"><path d="M1.500 14.500v-9.500h1l1-1h3l1 1h4v2.500" fill="#8a8a28" stroke="#000"/><path d="M2.500 6v7l2-4.500v-2.500z" fill="#f0f090"/><path d="M1.500 14.500l3.500-6h10.500l-3.500 6z" fill="#8c9428" stroke="#000"/><path d="M9.500 4.500c1-2.700 4-2.700 5.300 .3" fill="none" stroke="#000" stroke-width="1.200"/><path d="M15.800 2.300v3.700h-3.700z" fill="#000"/></svg>
<svg class="ic" style="left:65.00px;top:42.60px" width="16" height="16" viewBox="0 0 16 16"><path d="M1.5 1.5h13v13h-12l-1-1z" fill="#6e6e1e" stroke="#000"/><rect x="4" y="2" width="8" height="6" fill="#d4d0c8"/><rect x="4" y="10" width="8" height="5" fill="#000"/><rect x="9" y="11" width="2" height="3" fill="#d4d0c8"/></svg>
<div class="ab" style="left:88.70px;top:41.50px;width:1px;height:19.50px;background:#808080"></div><div class="ab" style="left:89.70px;top:41.50px;width:1px;height:19.50px;background:#fff"></div>
<svg class="ic" style="left:98.00px;top:42.60px" width="16" height="16" viewBox="0 0 16 16"><path d="M5.300 1.200l4.200 9.500M10.200 1.200l-4.200 9.500" stroke="#303040" stroke-width="1.300" fill="none"/><ellipse cx="4.900" cy="12" rx="1.500" ry="2.400" fill="none" stroke="#2c2c98" stroke-width="1.300" transform="rotate(15 4.900 12)"/><ellipse cx="10.500" cy="12" rx="1.500" ry="2.400" fill="none" stroke="#2c2c98" stroke-width="1.300" transform="rotate(-15 10.500 12)"/></svg>
<svg class="ic" style="left:123.00px;top:42.60px" width="16" height="16" viewBox="0 0 16 16"><path d="M1.500 2.500h5l2 2v7h-7z" fill="#fff" stroke="#000"/><path d="M3 5.500h2M3 7.500h4M3 9.500h4" stroke="#606060"/><path d="M7.500 5.500h6l2 2v7.500h-8z" fill="#fff" stroke="#282888"/><path d="M9 8.500h3M9 10.500h5M9 12.500h5" stroke="#4848a8"/></svg>
<svg class="ic" style="left:148.00px;top:42.60px" width="16" height="16" viewBox="0 0 16 16"><path d="M1 3.500h12v11h-12z" fill="#80804c" stroke="#303018"/><path d="M4.500 4v-1.500h1.500v-1h2.500v1h1.500v1.500z" fill="#d8d8c8" stroke="#303018"/><path d="M7.500 7.500h6l2 2v5.500h-8z" fill="#fff" stroke="#282888"/><path d="M9 10.500h3M9 12.500h5" stroke="#4848a8"/></svg>
<div class="ab" style="left:171.70px;top:41.50px;width:1px;height:19.50px;background:#808080"></div><div class="ab" style="left:172.70px;top:41.50px;width:1px;height:19.50px;background:#fff"></div>
<svg class="ic" style="left:181.00px;top:42.60px" width="16" height="16" viewBox="0 0 16 16"><path d="M.5 14.500v-5l2.500-6.500h2.500l1.500 4.500v7z" fill="#000"/><path d="M15.500 14.500v-5l-2.500-6.500h-2.500l-1.500 4.500v7z" fill="#000"/><rect x="6.500" y="6" width="3" height="3.500" fill="#000"/><rect x="2" y="9.500" width="1" height="3.500" fill="#c8c8c8"/><rect x="10.500" y="9.500" width="1" height="3.500" fill="#c8c8c8"/></svg>
<svg class="ic" style="left:206.00px;top:42.60px" width="16" height="16" viewBox="0 0 16 16"><path d="M6.500 1.500h5.500l2 2v8h-7.500z" fill="#fff" stroke="#282888"/><path d="M8 5.500h4M8 7.500h4" stroke="#b0b0d8"/><path d="M2.700 15v-8.500h2.600c2.300 0 2.300 4 0 4h-2.600M5.300 10.500l2.200 4.500" fill="none" stroke="#000" stroke-width="1.500"/></svg>
<div class="ab" style="left:229.70px;top:41.50px;width:1px;height:19.50px;background:#808080"></div><div class="ab" style="left:230.70px;top:41.50px;width:1px;height:19.50px;background:#fff"></div>
<svg class="ic" style="left:239.00px;top:42.60px" width="16" height="16" viewBox="0 0 16 16"><path d="M6 8.500c1.500-3.500 8-4 8 .5c0 1.500-.5 2.500-1.500 3.500" fill="none" stroke="#202088" stroke-width="1.500"/><path d="M2.300 6.200v5.300h5.700z" fill="#181880"/></svg>
<svg class="ic" style="left:264.00px;top:42.60px" width="16" height="16" viewBox="0 0 16 16"><g transform="translate(1 1)"><path d="M10 8.500c-1.500-3.500-8-4-8 .5c0 1.500.5 2.500 1.500 3.500" fill="none" stroke="#fff" stroke-width="1.500"/><path d="M13.700 6.200v5.300h-5.700z" fill="#fff"/></g><path d="M10 8.500c-1.500-3.500-8-4-8 .5c0 1.500.5 2.500 1.500 3.500" fill="none" stroke="#8c8c8c" stroke-width="1.500"/><path d="M13.700 6.200v5.300h-5.700z" fill="#8c8c8c"/></svg>
<div class="ab" style="left:287.70px;top:41.50px;width:1px;height:19.50px;background:#808080"></div><div class="ab" style="left:288.70px;top:41.50px;width:1px;height:19.50px;background:#fff"></div>
<svg class="ic" style="left:297.00px;top:42.60px" width="16" height="16" viewBox="0 0 16 16"><rect x=".5" y="1.500" width="15" height="13" fill="#fff" stroke="#303030"/><rect x="1" y="2" width="14" height="3.500" fill="#20209a"/><path d="M1 8.500h14M1 11.500h14M4.500 5.500v9M8 5.500v9M11.500 5.500v9" stroke="#404040" stroke-width=".8"/></svg>
<svg class="ic" style="left:320.50px;top:49.60px" width="7" height="4" viewBox="0 0 7 4"><path d="M0 0h7l-3.500 4z" fill="#000"/></svg>
<div class="ab" style="left:333.70px;top:41.50px;width:1px;height:19.50px;background:#808080"></div><div class="ab" style="left:334.70px;top:41.50px;width:1px;height:19.50px;background:#fff"></div>
<svg class="ic" style="left:343.00px;top:42.60px" width="16" height="16" viewBox="0 0 16 16"><path d="M4.500 .5l8 7.500l-8 7.500z" fill="#28288c" stroke="#28288c" stroke-width=".6"/></svg>
<svg class="ic" style="left:368.00px;top:42.60px" width="16" height="16" viewBox="0 0 16 16"><rect x="2" y="2" width="12" height="12" fill="#848484"/><path d="M2.500 14.500h12v-12" stroke="#fff" fill="none"/></svg>
<svg class="ic" style="left:393.00px;top:42.60px" width="16" height="16" viewBox="0 0 16 16"><path d="M6.500 4.500h5.500l3 3v8h-8.500z" fill="#eceae4" stroke="#8c8c8c"/><path d="M8 9.500h5M8 11.500h5M8 13.500h5" stroke="#a0a0a0"/><path d="M.5 3h4v-2.500l4.500 4.500l-4.500 4.500v-2.500h-4z" fill="#8c8c8c"/></svg>
<div class="ab" style="left:416.70px;top:41.50px;width:1px;height:19.50px;background:#808080"></div><div class="ab" style="left:417.70px;top:41.50px;width:1px;height:19.50px;background:#fff"></div>
<svg class="ic" style="left:426.00px;top:42.60px" width="16" height="16" viewBox="0 0 16 16"><text x="8" y="14.500" text-anchor="middle" font-family="Liberation Sans" font-weight="bold" font-size="18" fill="#ece460" stroke="#000" stroke-width="1.500" paint-order="stroke">?</text></svg>
<div class="ab " style="left:0.00px;top:39.00px;width:1.00px;height:825.00px;background:#868686"></div>
<div class="ab " style="left:1.00px;top:39.00px;width:1.00px;height:825.00px;background:#f6f6f4"></div>
<div class="ab " style="left:2.00px;top:67.00px;width:250.00px;height:1.00px;background:#8c8c8c"></div>
<div class="ab " style="left:2.00px;top:69.00px;width:250.00px;height:793.00px;border-top:1px solid #fff;border-right:1px solid #808080;border-bottom:3px solid #aaa6a0;box-sizing:border-box"></div>
<div class="ab " style="left:0.00px;top:862.00px;width:256.00px;height:2.00px;background:#f4f4f2"></div>
<div class="t" style="left:12.70px;top:76.00px;height:16px;line-height:16px;font-size:12px;transform:scaleX(0.8886);transform-origin:0 50%;color:#000;">Object View</div>
<div class="ab btn" style="left:229.50px;top:72.00px;width:20.50px;height:18.00px;"><svg width="20" height="18" viewBox="0 0 20 18" style="position:absolute;left:0;top:0"><path d="M4.500 3l10 11M14.500 3l-10 11" stroke="#b01818" stroke-width="2"/></svg></div>
<div class="ab " style="left:4.00px;top:93.00px;width:247.00px;height:766.00px;background:#fff;border-top:2px solid #606060;border-left:2px solid #5a5a5a;border-right:2px solid #eceae6;border-bottom:2px solid #eceae6;box-sizing:border-box"></div>
<div class="ab " style="left:13.50px;top:103.00px;width:14.00px;height:1.00px;background:repeating-linear-gradient(90deg,#a0a0a0 0 1px,transparent 1px 2px)"></div>
<div class="ab " style="left:33.00px;top:111.00px;width:1.00px;height:88.00px;background:repeating-linear-gradient(180deg,#a0a0a0 0 1px,transparent 1px 2px)"></div>
<div class="ab " style="left:9.50px;top:98.50px;width:9.00px;height:9.00px;background:#fff;border:1px solid #808080;box-sizing:border-box"><div class="ab" style="left:1px;top:3px;width:5px;height:1px;background:#000"></div></div>
<svg class="ic" style="left:25px;top:96px" width="16" height="16" viewBox="0 0 16 16"><path d="M2.500 4.500l3-2.500h8v10l-3 2.500h-8z" fill="#d8d8d8" stroke="#404040"/><path d="M2.500 4.500h8v10M10.500 4.500l3-2.500" fill="none" stroke="#404040"/><path d="M10.500 4.500l3-2.500v10l-3 2.500z" fill="#707070"/><path d="M4 7h5M4 9h5" stroke="#888"/></svg>
<div class="t" style="left:46.50px;top:94.40px;height:16px;line-height:16px;font-size:12px;transform:scaleX(0.8775);transform-origin:0 50%;color:#000;">UNITOLL2(magf_rj)</div>
<div class="ab " style="left:38.00px;top:119.00px;width:6.00px;height:1.00px;background:repeating-linear-gradient(90deg,#a0a0a0 0 1px,transparent 1px 2px)"></div>
<div class="ab " style="left:29.00px;top:114.50px;width:9.00px;height:9.00px;background:#fff;border:1px solid #808080;box-sizing:border-box"><div class="ab" style="left:1px;top:3px;width:5px;height:1px;background:#000"></div><div class="ab" style="left:3px;top:1px;width:1px;height:5px;background:#000"></div></div>
<svg class="ic" style="left:44px;top:110.50px" width="16" height="16" viewBox="0 0 16 16"><path d="M1.500 3.500l1-1.500h4l1 1.500h5v10h-11z" fill="#f4f060" stroke="#404040"/><path d="M1.500 2.800l1-1.300h4l1 1.300z" fill="#505050"/></svg>
<div class="t" style="left:65.25px;top:110.40px;height:16px;line-height:16px;font-size:12px;transform:scaleX(0.8849);transform-origin:0 50%;color:#000;">System Tables</div>
<div class="ab " style="left:38.00px;top:135.00px;width:6.00px;height:1.00px;background:repeating-linear-gradient(90deg,#a0a0a0 0 1px,transparent 1px 2px)"></div>
<div class="ab " style="left:29.00px;top:130.50px;width:9.00px;height:9.00px;background:#fff;border:1px solid #808080;box-sizing:border-box"><div class="ab" style="left:1px;top:3px;width:5px;height:1px;background:#000"></div><div class="ab" style="left:3px;top:1px;width:1px;height:5px;background:#000"></div></div>
<svg class="ic" style="left:44px;top:126.50px" width="16" height="16" viewBox="0 0 16 16"><path d="M1.500 3.500l1-1.500h4l1 1.500h5v10h-11z" fill="#f4f060" stroke="#404040"/><path d="M1.500 2.800l1-1.300h4l1 1.300z" fill="#505050"/></svg>
<div class="t" style="left:65.25px;top:126.40px;height:16px;line-height:16px;font-size:12px;transform:scaleX(0.9028);transform-origin:0 50%;color:#000;">User Tables</div>
<div class="ab " style="left:38.00px;top:151.00px;width:6.00px;height:1.00px;background:repeating-linear-gradient(90deg,#a0a0a0 0 1px,transparent 1px 2px)"></div>
<div class="ab " style="left:29.00px;top:146.50px;width:9.00px;height:9.00px;background:#fff;border:1px solid #808080;box-sizing:border-box"><div class="ab" style="left:1px;top:3px;width:5px;height:1px;background:#000"></div><div class="ab" style="left:3px;top:1px;width:1px;height:5px;background:#000"></div></div>
<svg class="ic" style="left:44px;top:142.50px" width="16" height="16" viewBox="0 0 16 16"><path d="M1.500 3.500l1-1.500h4l1 1.500h5v10h-11z" fill="#f4f060" stroke="#404040"/><path d="M1.500 2.800l1-1.300h4l1 1.300z" fill="#505050"/></svg>
<div class="t" style="left:65.25px;top:142.40px;height:16px;line-height:16px;font-size:12px;transform:scaleX(0.8776);transform-origin:0 50%;color:#000;">Views</div>
<div class="ab " style="left:38.00px;top:167.00px;width:6.00px;height:1.00px;background:repeating-linear-gradient(90deg,#a0a0a0 0 1px,transparent 1px 2px)"></div>
<div class="ab " style="left:29.00px;top:162.50px;width:9.00px;height:9.00px;background:#fff;border:1px solid #808080;box-sizing:border-box"><div class="ab" style="left:1px;top:3px;width:5px;height:1px;background:#000"></div><div class="ab" style="left:3px;top:1px;width:1px;height:5px;background:#000"></div></div>
<svg class="ic" style="left:44px;top:158.50px" width="16" height="16" viewBox="0 0 16 16"><path d="M1.500 3.500l1-1.500h4l1 1.500h5v10h-11z" fill="#f4f060" stroke="#404040"/><path d="M1.500 2.800l1-1.300h4l1 1.300z" fill="#505050"/></svg>
<div class="t" style="left:65.25px;top:158.40px;height:16px;line-height:16px;font-size:12px;transform:scaleX(0.8427);transform-origin:0 50%;color:#000;">Aliases</div>
<div class="ab " style="left:38.00px;top:183.00px;width:6.00px;height:1.00px;background:repeating-linear-gradient(90deg,#a0a0a0 0 1px,transparent 1px 2px)"></div>
<div class="ab " style="left:29.00px;top:178.50px;width:9.00px;height:9.00px;background:#fff;border:1px solid #808080;box-sizing:border-box"><div class="ab" style="left:1px;top:3px;width:5px;height:1px;background:#000"></div><div class="ab" style="left:3px;top:1px;width:1px;height:5px;background:#000"></div></div>
<svg class="ic" style="left:44px;top:174.50px" width="16" height="16" viewBox="0 0 16 16"><path d="M1.500 3.500l1-1.500h4l1 1.500h5v10h-11z" fill="#f4f060" stroke="#404040"/><path d="M1.500 2.800l1-1.300h4l1 1.300z" fill="#505050"/></svg>
<div class="t" style="left:65.25px;top:174.40px;height:16px;line-height:16px;font-size:12px;transform:scaleX(0.8965);transform-origin:0 50%;color:#000;">Temporary Tables</div>
<div class="ab " style="left:38.00px;top:199.00px;width:6.00px;height:1.00px;background:repeating-linear-gradient(90deg,#a0a0a0 0 1px,transparent 1px 2px)"></div>
<div class="ab " style="left:29.00px;top:194.50px;width:9.00px;height:9.00px;background:#fff;border:1px solid #808080;box-sizing:border-box"><div class="ab" style="left:1px;top:3px;width:5px;height:1px;background:#000"></div><div class="ab" style="left:3px;top:1px;width:1px;height:5px;background:#000"></div></div>
<svg class="ic" style="left:44px;top:190.50px" width="16" height="16" viewBox="0 0 16 16"><path d="M1.500 3.500l1-1.500h4l1 1.500h5v10h-11z" fill="#f4f060" stroke="#404040"/><path d="M1.500 2.800l1-1.300h4l1 1.300z" fill="#505050"/></svg>
<div class="t" style="left:65.25px;top:190.40px;height:16px;line-height:16px;font-size:12px;transform:scaleX(0.8996);transform-origin:0 50%;color:#000;">Procedures/Functions</div>
<div class="ab " style="left:252.00px;top:68.00px;width:3.00px;height:794.00px;background:#efeeeb"></div>
<div class="ab " style="left:260.00px;top:67.00px;width:891.00px;height:759.00px;background:#fff;border-top:1px solid #505050;border-left:2px solid #505050;box-sizing:border-box"></div>
<svg class="ic" style="left:263px;top:69px" width="6" height="7" viewBox="0 0 6 7"><path d="M4.500 0l-3 5.500" stroke="#505050" stroke-width="1.300"/></svg>
<div class="ab " style="left:263.25px;top:94.00px;width:535.00px;height:17.00px;background:#000"></div>
<div class="cl sel" style="top:95.0px"><span class="k">select</span> roadno   <svg class="cj" viewBox="0 0 13 17"><use href="#g8def"/></svg><svg class="cj" viewBox="0 0 13 17"><use href="#g6bb5"/></svg>,<span class="f">sum</span>(vehcount)   <svg class="cj" viewBox="0 0 13 17"><use href="#g51fa"/></svg><svg class="cj" viewBox="0 0 13 17"><use href="#g53e3"/></svg><svg class="cj" viewBox="0 0 13 17"><use href="#g8f66"/></svg><svg class="cj" viewBox="0 0 13 17"><use href="#g6d41"/></svg><svg class="cj" viewBox="0 0 13 17"><use href="#g91cf"/></svg>,&#x27;&#x27;,<span class="f">sum</span>(money_r) <svg class="cj" viewBox="0 0 13 17"><use href="#g51fa"/></svg><svg class="cj" viewBox="0 0 13 17"><use href="#g53e3"/></svg><svg class="cj" viewBox="0 0 13 17"><use href="#g603b"/></svg><svg class="cj" viewBox="0 0 13 17"><use href="#g6536"/></svg><svg class="cj" viewBox="0 0 13 17"><use href="#g5165"/></svg>,&#x27;&#x27;,</div>
<div class="cl" style="top:129.0px"><span class="f">sum</span>(<span class="k">case</span> <span class="k">when</span> vehkindflag=2 <span class="k">then</span> vehcount <span class="k">else</span> <span class="z">0</span> <span class="k">end</span>) <svg class="cj" viewBox="0 0 13 17"><use href="#g8d27"/></svg><svg class="cj" viewBox="0 0 13 17"><use href="#g8f66"/></svg><svg class="cj" viewBox="0 0 13 17"><use href="#g8f66"/></svg><svg class="cj" viewBox="0 0 13 17"><use href="#g6d41"/></svg><svg class="cj" viewBox="0 0 13 17"><use href="#g91cf"/></svg>,</div>
<div class="cl" style="top:146.0px"><span class="f">sum</span>(<span class="k">case</span> <span class="k">when</span> vehkindflag=2 <span class="k">then</span> money_r <span class="k">else</span> <span class="z">0</span> <span class="k">end</span>) <svg class="cj" viewBox="0 0 13 17"><use href="#g8d27"/></svg><svg class="cj" viewBox="0 0 13 17"><use href="#g8f66"/></svg><svg class="cj" viewBox="0 0 13 17"><use href="#g6536"/></svg><svg class="cj" viewBox="0 0 13 17"><use href="#g8d39"/></svg><svg class="cj" viewBox="0 0 13 17"><use href="#g989d"/></svg>,</div>
<div class="cl" style="top:180.0px"><span class="f">sum</span>(<span class="k">case</span> <span class="k">when</span> vehkindflag=2 <span class="k">and</span> weightflag&lt;4 <span class="k">and</span> <span class="f">abs</span>(AllWeight)&gt;(<span class="f">abs</span>(AllWeight)-<span class="f">abs</span>(ExLimitWeight))<span class="as">*</span>(1+3<span class="z">0</span>/1<span class="z">0</span><span class="z">0</span>.<span class="z">0</span>)</div>
<div class="cl" style="top:197.0px">    <span class="k">then</span> vehcount <span class="k">else</span> <span class="z">0</span> <span class="k">end</span>) <svg class="cj" viewBox="0 0 13 17"><use href="#g8d85"/></svg><svg class="cj" viewBox="0 0 13 17"><use href="#g9650"/></svg><svg class="cj" viewBox="0 0 13 17"><use href="#g8f66"/></svg><svg class="cj" viewBox="0 0 13 17"><use href="#g6d41"/></svg><svg class="cj" viewBox="0 0 13 17"><use href="#g91cf"/></svg>,</div>
<div class="cl" style="top:214.0px"><span class="f">sum</span>(<span class="k">case</span> <span class="k">when</span> vehkindflag=2 <span class="k">and</span> weightflag&lt;4 <span class="k">and</span> <span class="f">abs</span>(AllWeight)&gt;(<span class="f">abs</span>(AllWeight)-<span class="f">abs</span>(ExLimitWeight))<span class="as">*</span>(1+3<span class="z">0</span>/1<span class="z">0</span><span class="z">0</span>.<span class="z">0</span>)</div>
<div class="cl" style="top:231.0px">    <span class="k">then</span> money_r <span class="k">else</span> <span class="z">0</span> <span class="k">end</span>) <svg class="cj" viewBox="0 0 13 17"><use href="#g8d85"/></svg><svg class="cj" viewBox="0 0 13 17"><use href="#g9650"/></svg><svg class="cj" viewBox="0 0 13 17"><use href="#g8f66"/></svg><svg class="cj" viewBox="0 0 13 17"><use href="#g8f86"/></svg><svg class="cj" viewBox="0 0 13 17"><use href="#g6536"/></svg><svg class="cj" viewBox="0 0 13 17"><use href="#g8d39"/></svg><svg class="cj" viewBox="0 0 13 17"><use href="#g989d"/></svg>,</div>
<div class="cl" style="top:248.0px"><span class="f">sum</span>(<span class="k">case</span> <span class="k">when</span> vehkindflag=2 <span class="k">and</span> weightflag&lt;4 <span class="k">and</span> <span class="f">abs</span>(AllWeight)&gt;(<span class="f">abs</span>(AllWeight)-<span class="f">abs</span>(ExLimitWeight))<span class="as">*</span>(1+3<span class="z">0</span>/1<span class="z">0</span><span class="z">0</span>.<span class="z">0</span>)</div>
<div class="cl" style="top:265.0px">    <span class="k">then</span> money_r-vehmoney <span class="k">else</span> <span class="z">0</span> <span class="k">end</span>) <svg class="cj" viewBox="0 0 13 17"><use href="#g8d85"/></svg><svg class="cj" viewBox="0 0 13 17"><use href="#g9650"/></svg><svg class="cj" viewBox="0 0 13 17"><use href="#g52a0"/></svg><svg class="cj" viewBox="0 0 13 17"><use href="#g6536"/></svg><svg class="cj" viewBox="0 0 13 17"><use href="#g91d1"/></svg><svg class="cj" viewBox="0 0 13 17"><use href="#g989d"/></svg>,</div>
<div class="cl" style="top:299.0px"><span class="f">sum</span>(<span class="k">case</span> <span class="k">when</span> vehkindflag=2 <span class="k">and</span> weightflag=4 <span class="k">then</span> vehcount <span class="k">else</span> <span class="z">0</span> <span class="k">end</span>) <svg class="cj" viewBox="0 0 13 17"><use href="#g964d"/></svg><svg class="cj" viewBox="0 0 13 17"><use href="#g6863"/></svg><svg class="cj" viewBox="0 0 13 17"><use href="#g8f66"/></svg><svg class="cj" viewBox="0 0 13 17"><use href="#g6d41"/></svg><svg class="cj" viewBox="0 0 13 17"><use href="#g91cf"/></svg>,</div>
<div class="cl" style="top:316.0px"><span class="f">sum</span>(<span class="k">case</span> <span class="k">when</span> vehkindflag=2 <span class="k">and</span> weightflag=4 <span class="k">then</span> money_r <span class="k">else</span> <span class="z">0</span> <span class="k">end</span>) <svg class="cj" viewBox="0 0 13 17"><use href="#g964d"/></svg><svg class="cj" viewBox="0 0 13 17"><use href="#g6863"/></svg><svg class="cj" viewBox="0 0 13 17"><use href="#g6536"/></svg><svg class="cj" viewBox="0 0 13 17"><use href="#g8d39"/></svg><svg class="cj" viewBox="0 0 13 17"><use href="#g91d1"/></svg><svg class="cj" viewBox="0 0 13 17"><use href="#g989d"/></svg>,</div>
<div class="cl" style="top:333.0px"><span class="f">sum</span>(<span class="k">case</span> <span class="k">when</span> vehkindflag=2 <span class="k">and</span> weightflag=4 <span class="k">then</span> prevehmoney-money_r <span class="k">else</span> <span class="z">0</span> <span class="k">end</span>) <svg class="cj" viewBox="0 0 13 17"><use href="#g964d"/></svg><svg class="cj" viewBox="0 0 13 17"><use href="#g6863"/></svg><svg class="cj" viewBox="0 0 13 17"><use href="#g51cf"/></svg><svg class="cj" viewBox="0 0 13 17"><use href="#g514d"/></svg><svg class="cj" viewBox="0 0 13 17"><use href="#g91d1"/></svg><svg class="cj" viewBox="0 0 13 17"><use href="#g989d"/></svg>,</div>
<div class="cl" style="top:384.0px"><span class="f">sum</span>(<span class="k">case</span> <span class="k">when</span> vehkindflag=2 <span class="k">and</span> weightflag&lt;4 <span class="k">and</span> <span class="f">abs</span>(AllWeight)&lt;=(<span class="f">abs</span>(AllWeight)-<span class="f">abs</span>(ExLimitWeight))<span class="as">*</span>(1+3<span class="z">0</span>/1<span class="z">0</span><span class="z">0</span>.<span class="z">0</span>)</div>
<div class="cl" style="top:401.0px">    <span class="k">then</span> vehcount <span class="k">else</span> <span class="z">0</span> <span class="k">end</span>) <svg class="cj" viewBox="0 0 13 17"><use href="#g6b63"/></svg><svg class="cj" viewBox="0 0 13 17"><use href="#g5e38"/></svg><svg class="cj" viewBox="0 0 13 17"><use href="#g88c5"/></svg><svg class="cj" viewBox="0 0 13 17"><use href="#g8f7d"/></svg><svg class="cj" viewBox="0 0 13 17"><use href="#g53ca"/></svg><svg class="cj" viewBox="0 0 13 17"><use href="#g8d85"/></svg><svg class="cj" viewBox="0 0 13 17"><use href="#g8f7d"/></svg>3<span class="z">0</span><svg class="cj" viewBox="0 0 13 17"><use href="#g4ee5"/></svg><svg class="cj" viewBox="0 0 13 17"><use href="#g5185"/></svg><svg class="cj" viewBox="0 0 13 17"><use href="#g8f66"/></svg><svg class="cj" viewBox="0 0 13 17"><use href="#g6d41"/></svg><svg class="cj" viewBox="0 0 13 17"><use href="#g91cf"/></svg>,</div>
<div class="cl" style="top:435.0px"><span class="f">sum</span>(<span class="k">case</span> <span class="k">when</span> vehkindflag=2 <span class="k">and</span> weightflag&lt;4</div>
<div class="cl" style="top:452.0px">    <span class="k">and</span> <span class="f">abs</span>(AllWeight)&gt;(<span class="f">abs</span>(AllWeight)-<span class="f">abs</span>(ExLimitWeight))<span class="as">*</span>(1+3<span class="z">0</span>/1<span class="z">0</span><span class="z">0</span>.<span class="z">0</span>)</div>
<div class="cl" style="top:469.0px">    <span class="k">and</span> <span class="f">abs</span>(AllWeight)&lt;=(<span class="f">abs</span>(AllWeight)-<span class="f">abs</span>(ExLimitWeight))<span class="as">*</span>(1+5<span class="z">0</span>/1<span class="z">0</span><span class="z">0</span>.<span class="z">0</span>)</div>
<div class="cl" style="top:486.0px">    <span class="k">then</span> vehcount <span class="k">else</span> <span class="z">0</span> <span class="k">end</span>) <svg class="cj" viewBox="0 0 13 17"><use href="#g8f7b"/></svg><svg class="cj" viewBox="0 0 13 17"><use href="#g5ea6"/></svg><svg class="cj" viewBox="0 0 13 17"><use href="#g8d85"/></svg><svg class="cj" viewBox="0 0 13 17"><use href="#g8f7d"/></svg>3<span class="z">0</span><svg class="cj" viewBox="0 0 13 17"><use href="#g81f3"/></svg>5<span class="z">0</span><svg class="cj" viewBox="0 0 13 17"><use href="#g8f66"/></svg><svg class="cj" viewBox="0 0 13 17"><use href="#g6d41"/></svg><svg class="cj" viewBox="0 0 13 17"><use href="#g91cf"/></svg>,</div>
<div class="cl" style="top:520.0px"><span class="f">sum</span>(<span class="k">case</span> <span class="k">when</span> vehkindflag=2 <span class="k">and</span> weightflag&lt;4</div>
<div class="cl" style="top:537.0px">    <span class="k">and</span> <span class="f">abs</span>(AllWeight)&gt;(<span class="f">abs</span>(AllWeight)-<span class="f">abs</span>(ExLimitWeight))<span class="as">*</span>(1+5<span class="z">0</span>/1<span class="z">0</span><span class="z">0</span>.<span class="z">0</span>)</div>
<div class="cl" style="top:554.0px">    <span class="k">and</span> <span class="f">abs</span>(AllWeight)&lt;=(<span class="f">abs</span>(AllWeight)-<span class="f">abs</span>(ExLimitWeight))<span class="as">*</span>(1+1<span class="z">0</span><span class="z">0</span>/1<span class="z">0</span><span class="z">0</span>.<span class="z">0</span>)</div>
<div class="cl" style="top:571.0px">    <span class="k">then</span> vehcount <span class="k">else</span> <span class="z">0</span> <span class="k">end</span>) <svg class="cj" viewBox="0 0 13 17"><use href="#g4e2d"/></svg><svg class="cj" viewBox="0 0 13 17"><use href="#g5ea6"/></svg><svg class="cj" viewBox="0 0 13 17"><use href="#g8d85"/></svg><svg class="cj" viewBox="0 0 13 17"><use href="#g8f7d"/></svg>5<span class="z">0</span><svg class="cj" viewBox="0 0 13 17"><use href="#g81f3"/></svg>1<span class="z">0</span><span class="z">0</span><svg class="cj" viewBox="0 0 13 17"><use href="#g8f66"/></svg><svg class="cj" viewBox="0 0 13 17"><use href="#g6d41"/></svg><svg class="cj" viewBox="0 0 13 17"><use href="#g91cf"/></svg>,</div>
<div class="cl" style="top:605.0px"><span class="f">sum</span>(<span class="k">case</span> <span class="k">when</span> vehkindflag=2 <span class="k">and</span> weightflag&lt;4</div>
<div class="cl" style="top:622.0px">    <span class="k">and</span> <span class="f">abs</span>(AllWeight)&gt;(<span class="f">abs</span>(AllWeight)-<span class="f">abs</span>(ExLimitWeight))<span class="as">*</span>(1+1<span class="z">0</span><span class="z">0</span>/1<span class="z">0</span><span class="z">0</span>.<span class="z">0</span>)</div>
<div class="cl" style="top:639.0px">    <span class="k">and</span> <span class="f">abs</span>(AllWeight)&lt;=(<span class="f">abs</span>(AllWeight)-<span class="f">abs</span>(ExLimitWeight))<span class="as">*</span>(1+15<span class="z">0</span>/1<span class="z">0</span><span class="z">0</span>.<span class="z">0</span>)</div>
<div class="cl" style="top:656.0px">    <span class="k">then</span> vehcount <span class="k">else</span> <span class="z">0</span> <span class="k">end</span>) <svg class="cj" viewBox="0 0 13 17"><use href="#g91cd"/></svg><svg class="cj" viewBox="0 0 13 17"><use href="#g5ea6"/></svg><svg class="cj" viewBox="0 0 13 17"><use href="#g8d85"/></svg><svg class="cj" viewBox="0 0 13 17"><use href="#g8f7d"/></svg>1<span class="z">0</span><span class="z">0</span><svg class="cj" viewBox="0 0 13 17"><use href="#g81f3"/></svg>15<span class="z">0</span><svg class="cj" viewBox="0 0 13 17"><use href="#g8f66"/></svg><svg class="cj" viewBox="0 0 13 17"><use href="#g6d41"/></svg><svg class="cj" viewBox="0 0 13 17"><use href="#g91cf"/></svg>,</div>
<div class="cl" style="top:690.0px"><span class="f">sum</span>(<span class="k">case</span> <span class="k">when</span> vehkindflag=2 <span class="k">and</span> weightflag&lt;4</div>
<div class="cl" style="top:707.0px">    <span class="k">and</span> <span class="f">abs</span>(AllWeight)&gt;(<span class="f">abs</span>(AllWeight)-<span class="f">abs</span>(ExLimitWeight))<span class="as">*</span>(1+15<span class="z">0</span>/1<span class="z">0</span><span class="z">0</span>.<span class="z">0</span>)</div>
<div class="cl" style="top:724.0px">    <span class="k">then</span> vehcount <span class="k">else</span> <span class="z">0</span> <span class="k">end</span>) <svg class="cj" viewBox="0 0 13 17"><use href="#g4e25"/></svg><svg class="cj" viewBox="0 0 13 17"><use href="#g91cd"/></svg><svg class="cj" viewBox="0 0 13 17"><use href="#g8d85"/></svg><svg class="cj" viewBox="0 0 13 17"><use href="#g8f7d"/></svg>15<span class="z">0</span><svg class="cj" viewBox="0 0 13 17"><use href="#g4ee5"/></svg><svg class="cj" viewBox="0 0 13 17"><use href="#g4e0a"/></svg><svg class="cj" viewBox="0 0 13 17"><use href="#g8f66"/></svg><svg class="cj" viewBox="0 0 13 17"><use href="#g6d41"/></svg><svg class="cj" viewBox="0 0 13 17"><use href="#g91cf"/></svg></div>
<div class="cl" style="top:758.0px"><span class="k">from</span> o <span class="k">group</span> <span class="k">by</span> roadno <span class="k">order</span> <span class="k">by</span> 1 <span class="k">with</span> ur;</div>
<div class="ab chk" style="left:1134.00px;top:68.50px;width:16.00px;height:740.00px;"></div>
<div class="ab btn" style="left:1134.00px;top:68.50px;width:16.00px;height:16.00px;"><svg width="16" height="16" viewBox="0 0 16 16" style="position:absolute;left:-1px;top:-1px"><path d="M4.500 10h7l-3.500-4z" fill="#000"/></svg></div>
<div class="ab btn" style="left:1134.00px;top:524.00px;width:16.00px;height:267.50px;"></div>
<div class="ab btn" style="left:1134.00px;top:792.00px;width:16.00px;height:16.00px;"><svg width="16" height="16" viewBox="0 0 16 16" style="position:absolute;left:-1px;top:-1px"><path d="M4.500 6h7l-3.500 4z" fill="#000"/></svg></div>
<div class="ab chk" style="left:261.30px;top:807.60px;width:872.70px;height:16.00px;"></div>
<div class="ab btn" style="left:261.30px;top:807.60px;width:16.00px;height:16.00px;"><svg width="16" height="16" viewBox="0 0 16 16" style="position:absolute;left:-1px;top:-1px"><path d="M10 4.500v7l-4-3.500z" fill="#fff" transform="translate(1 1)"/><path d="M10 4.500v7l-4-3.500z" fill="#808080"/></svg></div>
<div class="ab btn" style="left:1118.00px;top:807.60px;width:16.00px;height:16.00px;"><svg width="16" height="16" viewBox="0 0 16 16" style="position:absolute;left:-1px;top:-1px"><path d="M6 4.500v7l4-3.500z" fill="#fff" transform="translate(1 1)"/><path d="M6 4.500v7l4-3.500z" fill="#808080"/></svg></div>
<div class="ab " style="left:1134.00px;top:807.60px;width:16.00px;height:16.00px;background:#d4d0c8"></div>
<div class="ab sunk" style="left:260.00px;top:828.00px;width:296.00px;height:16.00px;"></div>
<div class="t" style="left:262.50px;top:828.50px;height:16px;line-height:16px;font-size:11px;letter-spacing:-0.161px;color:#000;white-space:pre;">Transaction autoCommit: On</div>
<div class="ab sunk" style="left:559.00px;top:828.00px;width:294.00px;height:16.00px;"></div>
<div class="t" style="left:561.00px;top:828.50px;height:16px;line-height:16px;font-size:11px;letter-spacing:-0.097px;color:#000;white-space:pre;">None transaction</div>
<div class="ab sunk" style="left:856.00px;top:828.00px;width:294.00px;height:16.00px;"></div>
<div class="t" style="left:857.50px;top:828.50px;height:16px;line-height:16px;font-size:11px;letter-spacing:-0.106px;color:#000;white-space:pre;">(Seperator between SQL)</div>
<div class="t" style="left:990.00px;top:828.50px;height:16px;line-height:16px;font-size:11px;color:#000;">;</div>
<div class="ab sunk" style="left:260.00px;top:847.00px;width:197.00px;height:17.00px;"></div>
<div class="t" style="left:262.50px;top:848.00px;height:16px;line-height:16px;font-size:11px;letter-spacing:-0.559px;color:#000;white-space:pre;">Ready</div>
<div class="ab sunk" style="left:460.00px;top:847.00px;width:195.60px;height:17.00px;"></div>
<div class="t" style="left:461.50px;top:848.00px;height:16px;line-height:16px;font-size:11px;letter-spacing:-0.265px;color:#000;white-space:pre;">Exec time:</div>
<div class="ab sunk" style="left:658.00px;top:847.00px;width:163.00px;height:17.00px;"></div>
<div class="t" style="left:659.50px;top:848.00px;height:16px;line-height:16px;font-size:11px;letter-spacing:-0.112px;color:#000;white-space:pre;">Row(s):</div>
<div class="ab sunk" style="left:824.60px;top:847.00px;width:164.00px;height:17.00px;"></div>
<div class="t" style="left:826.50px;top:848.00px;height:16px;line-height:16px;font-size:11px;letter-spacing:-0.252px;color:#000;white-space:pre;">Data source: UNITOLL2</div>
<div class="ab sunk" style="left:992.00px;top:847.00px;width:158.00px;height:17.00px;"></div>
<div class="t" style="left:993.00px;top:848.00px;height:16px;line-height:16px;font-size:11px;letter-spacing:0.076px;color:#000;white-space:pre;">User: magf_rj</div></div></body></html>
